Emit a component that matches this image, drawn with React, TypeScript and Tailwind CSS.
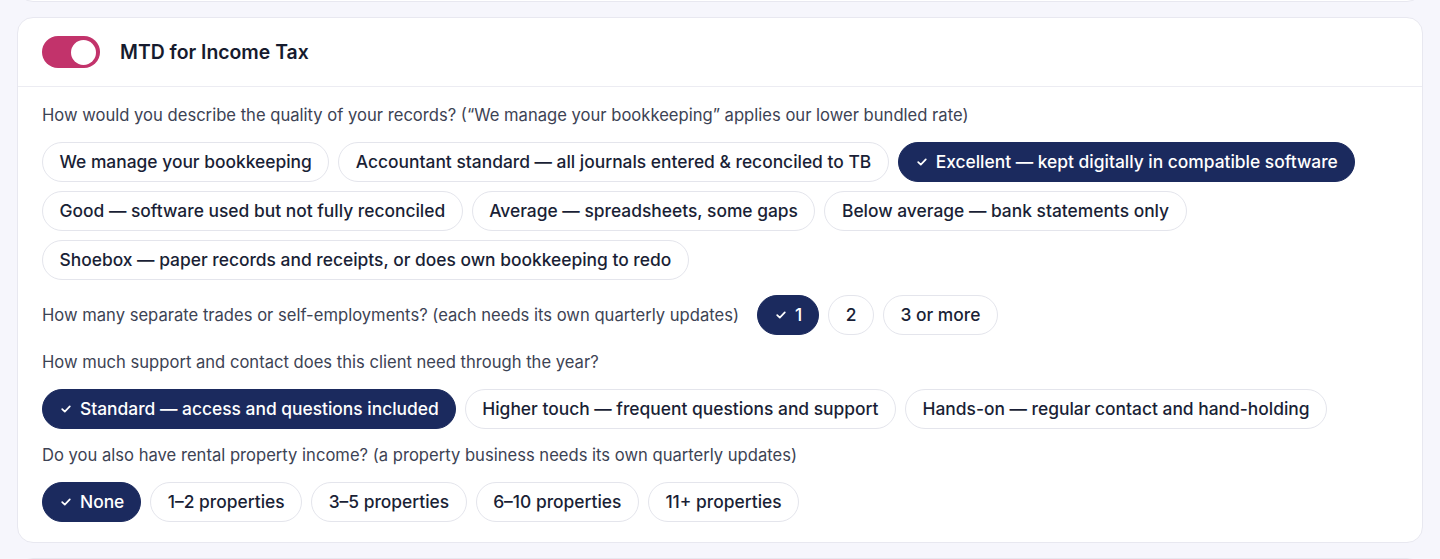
import React from "react";

type Opt = { label: string; selected?: boolean };

function Check() {
    return (
        <svg width="10" height="8" viewBox="0 0 10 8" fill="none" className="shrink-0">
            <path d="M1.2 4.2 3.8 6.7 8.8 1.3" stroke="currentColor" strokeWidth="1.7" strokeLinecap="round" strokeLinejoin="round" />
        </svg>
    );
}

function Chip({ label, selected }: Opt) {
    if (selected) {
        return (
            <button className="h-10 pl-[18px] pr-[16px] rounded-full border border-[#1b2a5e] bg-[#1b2a5e] text-white text-[17.4px] font-medium flex items-center gap-[9px] whitespace-nowrap">
                <Check />
                {label}
            </button>
        );
    }
    return (
        <button className="h-10 px-[16.5px] rounded-full border border-[#e4e5ec] bg-white text-[#1a1f36] text-[17.4px] font-medium flex items-center whitespace-nowrap">
            {label}
        </button>
    );
}

function ChipRow({ options }: { options: Opt[] }) {
    return (
        <div className="flex flex-wrap gap-[9px]">
            {options.map((o) => (
                <Chip key={o.label} {...o} />
            ))}
        </div>
    );
}

const quality: Opt[] = [
    { label: "We manage your bookkeeping" },
    { label: "Accountant standard — all journals entered & reconciled to TB" },
    { label: "Excellent — kept digitally in compatible software", selected: true },
    { label: "Good — software used but not fully reconciled" },
    { label: "Average — spreadsheets, some gaps" },
    { label: "Below average — bank statements only" },
    { label: "Shoebox — paper records and receipts, or does own bookkeeping to redo" },
];

const trades: Opt[] = [{ label: "1", selected: true }, { label: "2" }, { label: "3 or more" }];

const support: Opt[] = [
    { label: "Standard — access and questions included", selected: true },
    { label: "Higher touch — frequent questions and support" },
    { label: "Hands-on — regular contact and hand-holding" },
];

const property: Opt[] = [
    { label: "None", selected: true },
    { label: "1–2 properties" },
    { label: "3–5 properties" },
    { label: "6–10 properties" },
    { label: "11+ properties" },
];

export default function App() {
    return (
        <div className="min-h-screen bg-[#f6f6fc] px-[17px] font-['Inter','Noto_Sans',sans-serif] overflow-hidden">
            {/* previous card, cut off */}
            <div className="-mt-10 h-[42px] bg-white border border-[#e8e8f0] rounded-2xl"></div>

            <section className="mt-[15px] bg-white border border-[#e8e8f0] rounded-2xl">
                <div className="h-[69px] px-6 flex items-center gap-5 border-b border-[#ececf2]">
                    <div className="w-[58px] h-8 rounded-full bg-[#c2336b] flex items-center justify-end pr-[4px]">
                        <div className="w-[25px] h-[25px] rounded-full bg-white"></div>
                    </div>
                    <h2 className="text-[19.4px] font-semibold text-[#161b2e] pt-[2px]">MTD for Income Tax</h2>
                </div>

                <div className="px-6 pt-4 pb-5 flex flex-col gap-[15px] text-[#3d4354]">
                    <p className="text-[16.6px] leading-6">
                        How would you describe the quality of your records? (“We manage your bookkeeping” applies our lower bundled rate)
                    </p>
                    <ChipRow options={quality} />

                    <div className="flex items-center gap-[18px]">
                        <p className="text-[16.6px] leading-6">
                            How many separate trades or self-employments? (each needs its own quarterly updates)
                        </p>
                        <ChipRow options={trades} />
                    </div>

                    <p className="text-[16.6px] leading-6">How much support and contact does this client need through the year?</p>
                    <ChipRow options={support} />

                    <p className="text-[16.6px] leading-6 -mt-[1px]">
                        Do you also have rental property income? (a property business needs its own quarterly updates)
                    </p>
                    <ChipRow options={property} />
                </div>
            </section>

            <div className="mt-[15px] h-10 bg-white border border-[#e8e8f0] rounded-2xl"></div>
        </div>
    );
}
